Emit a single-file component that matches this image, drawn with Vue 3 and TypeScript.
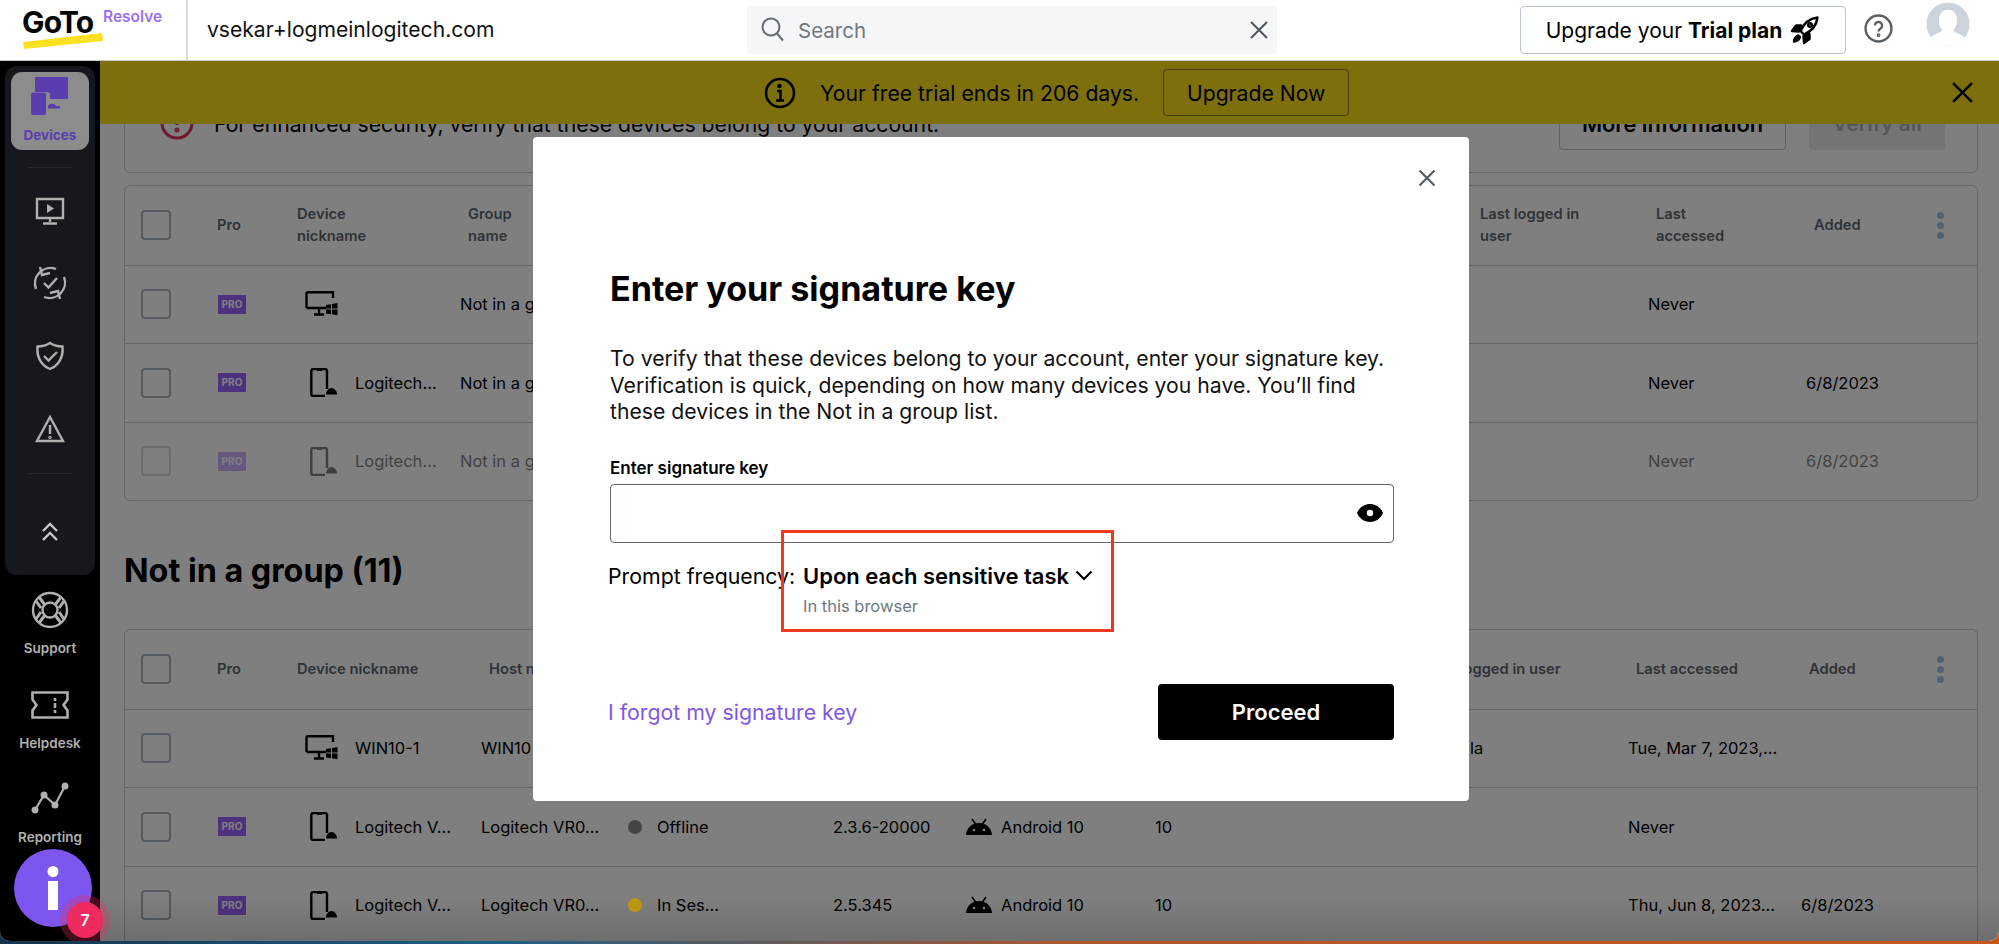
<script setup lang="ts">
interface Row {
  pro: boolean
  kind: 'desktop' | 'phone'
  nick: string
  group?: string
  never: string
  added: string
  dim?: boolean
}
interface Row2 {
  pro: boolean
  kind: 'desktop' | 'phone'
  nick: string
  host: string
  status?: string
  dot?: string
  version?: string
  os?: string
  sessions?: string
  user?: string
  access: string
  added: string
}
const rows1: Row[] = [
  { pro: true, kind: 'desktop', nick: '', group: 'Not in a group', never: 'Never', added: '' },
  { pro: true, kind: 'phone', nick: 'Logitech...', group: 'Not in a group', never: 'Never', added: '6/8/2023' },
  { pro: true, kind: 'phone', nick: 'Logitech...', group: 'Not in a group', never: 'Never', added: '6/8/2023', dim: true },
]
const rows2: Row2[] = [
  { pro: false, kind: 'desktop', nick: 'WIN10-1', host: 'WIN10', user: 'la', access: 'Tue, Mar 7, 2023,...', added: '' },
  { pro: true, kind: 'phone', nick: 'Logitech V...', host: 'Logitech VR0...', status: 'Offline', dot: '#444444', version: '2.3.6-20000', os: 'Android 10', sessions: '10', access: 'Never', added: '' },
  { pro: true, kind: 'phone', nick: 'Logitech V...', host: 'Logitech VR0...', status: 'In Ses...', dot: '#b8960f', version: '2.5.345', os: 'Android 10', sessions: '10', access: 'Thu, Jun 8, 2023...', added: '6/8/2023' },
]
</script>

<template>
  <div class="app">
    <svg class="defs" width="0" height="0" aria-hidden="true">
      <defs>
        <symbol id="desktop-win" viewBox="0 0 33 26">
          <path d="M1.500 17V2.500A1.200 1.200 0 0 1 2.700 1.300H28V7M1.500 17H21M9 23.500h10M14 18v5" fill="none" stroke="currentColor" stroke-width="2.400" />
          <path d="M21 14l5-.8V17.600H21zM27 13l5.500-.9v5.500H27zM21 18.600h5v4.600l-5-.8zM27 18.600h5.500v5.600L27 23.300z" fill="currentColor" />
        </symbol>
        <symbol id="phone-cloud" viewBox="0 0 28 29">
          <path d="M17 21V3a2 2 0 0 0-2-2H3.300a2 2 0 0 0-2 2v23a2 2 0 0 0 2 2H15" fill="none" stroke="currentColor" stroke-width="2.400" />
          <path d="M7 1.500h5v1.500H7z" fill="currentColor" />
          <path d="M16 26.500c0-3.500 2.500-6.500 5.500-6.500s5.500 3 5.500 6.500z" fill="currentColor" />
        </symbol>
        <symbol id="android" viewBox="0 0 28 18">
          <path d="M1 17C1.500 10 6.500 5 14 5s12.500 5 13 12z" fill="currentColor" />
          <path d="M7 1l3.500 5M21 1l-3.500 5" stroke="currentColor" stroke-width="1.600" />
          <circle cx="9" cy="12" r="1.300" fill="#fff" />
          <circle cx="19" cy="12" r="1.300" fill="#fff" />
        </symbol>
      </defs>
    </svg>

    <header class="topbar">
      <div class="logo">
        <span class="goto">GoTo</span>
        <span class="resolve">Resolve</span>
        <svg class="swoosh" width="82" height="18" viewBox="0 0 82 18"><path d="M1 10L80 1l1 8L2 17z" fill="#fbe122" /></svg>
      </div>
      <div class="account">vsekar+logmeinlogitech.com</div>
      <div class="search">
        <svg width="26" height="28" viewBox="0 0 26 28" fill="none" stroke="#5f6b76" stroke-width="2"><circle cx="11" cy="11" r="8.500" /><path d="M17 17.500l6 7" /></svg>
        <span class="search-text">Search</span>
        <svg class="search-x" width="20" height="20" viewBox="0 0 20 20" stroke="#4a5560" stroke-width="2"><path d="M2 2l16 16M18 2L2 18" /></svg>
      </div>
      <button class="upgrade">
        Upgrade your&nbsp;<b>Trial plan</b>
        <svg width="30" height="30" viewBox="0 0 30 30" fill="none" stroke="#000" stroke-width="2.400" stroke-linejoin="round"><path d="M27.500 2.500C19.500 3.500 13.500 9 10.500 16l3.500 3.500c7-3 12.500-9 13.500-17z" /><path d="M11 10.500H6l-4 5.500 7 .5zM19.500 19v5l-5.500 4-.5-7z" fill="#000" /><path d="M8.500 20.500C6 21 4.500 23.500 4 26.500c3-.5 5.500-2 6-4.500z" fill="#000" /><circle cx="20" cy="10" r="1.800" /></svg>
      </button>
      <svg class="help" width="29" height="29" viewBox="0 0 28 28" fill="none" stroke="#5a5f64" stroke-width="2.300"><circle cx="14" cy="14" r="12.500" /><path d="M10.500 11a3.500 3.500 0 1 1 5.500 3c-1.300.9-2 1.500-2 3" /><circle cx="14" cy="20.500" r=".7" /></svg>
      <svg class="avatar" width="44" height="44" viewBox="0 0 46 46"><defs><clipPath id="av"><circle cx="23" cy="23" r="22.500" /></clipPath></defs><circle cx="23" cy="23" r="22.500" fill="#ccd3da" /><g clip-path="url(#av)"><path d="M23 8c6 0 9.500 5 9.500 11 0 5-2 8.500-4 10.500 1 3 8 3 12 8V46H5v-8.500c4-5 11-5 12-8-2-2-3.500-5.500-3.500-10.500C13.500 13 17 8 23 8z" fill="#fff" /></g></svg>
    </header>

    <div class="shell">
      <aside class="sidebar">
        <div class="panel">
          <div class="tile">
            <svg width="40" height="38" viewBox="0 0 40 38" fill="#5a3eb0"><path d="M5 0h33v22H20v-4a3 3 0 0 0-3-3H5zM1 17.500a2 2 0 0 1 2-2h11a2 2 0 0 1 2 2V36a2 2 0 0 1-2 2H3a2 2 0 0 1-2-2z" /><path d="M18 29c1-3 7-3 8 0h4v2.500H18z" /></svg>
            <span class="tile-label">Devices</span>
          </div>
          <div class="rule"></div>
          <svg class="nav-i screen" width="30" height="30" viewBox="0 0 30 30" fill="none" stroke="currentColor" stroke-width="2.400"><path d="M2 3h26v19H2zM15 22v4M8 27.500h14" /><path d="M12 8l7 4.500-7 4.500z" fill="currentColor" stroke="none" /></svg>
          <svg class="nav-i sync" width="36" height="36" viewBox="0 0 36 36" fill="none" stroke="currentColor" stroke-width="2.400"><path d="M4 24A15.500 15.500 0 0 1 24 4M32 12a15.500 15.500 0 0 1-20 20" /><path d="M8 2l2 8 8-2M28 34l-2-8-8 2M12 18l4.500 4.500L25 13" /></svg>
          <svg class="nav-i shield" width="30" height="30" viewBox="0 0 30 30" fill="none" stroke="currentColor" stroke-width="2.400"><path d="M15 2c3 2 8 3.500 12.500 3.500C28.500 17 23 25 15 28 7 25 1.500 17 2.500 5.500 7 5.500 12 4 15 2z" /><path d="M9 15l4.500 4.500L22 11" /></svg>
          <svg class="nav-i warn" width="30" height="30" viewBox="0 0 30 30" fill="none" stroke="currentColor" stroke-width="2.400"><path d="M15 3l13 24H2z" /><path d="M15 11v9" /><circle cx="15" cy="23.500" r=".6" /></svg>
          <div class="rule r2"></div>
          <svg class="nav-i chev" width="18" height="20" viewBox="0 0 18 20" fill="none" stroke="currentColor" stroke-width="2.400"><path d="M2 9l7-7 7 7M2 18l7-7 7 7" /></svg>
        </div>
        <div class="side-link support">
          <svg width="38" height="38" viewBox="0 0 38 38" fill="none" stroke="currentColor" stroke-width="2.400"><circle cx="19" cy="19" r="17" /><circle cx="19" cy="19" r="7.500" /><path d="M8 6l6 8M30 6l-6 8M8 32l6-8M30 32l-6-8M5 10l5 7M33 10l-5 7M5 28l5-7M33 28l-5-7" stroke-width="3" /></svg>
          <span>Support</span>
        </div>
        <div class="side-link helpdesk">
          <svg width="38" height="28" viewBox="0 0 38 28" fill="none" stroke="currentColor" stroke-width="2.600"><path d="M1.500 1.500h35v7l-4 5.500 4 5.500v7h-35v-7l4-5.500-4-5.500z" /><path d="M24 7v3M24 12v5M24 19v3" /></svg>
          <span>Helpdesk</span>
        </div>
        <div class="side-link reporting">
          <svg width="38" height="32" viewBox="0 0 38 32" fill="none" stroke="currentColor" stroke-width="2.200"><path d="M4 28L13 13l11 10L34 4" /><circle cx="4" cy="28" r="2.400" fill="currentColor" /><circle cx="13" cy="13" r="2.400" fill="currentColor" /><circle cx="24" cy="23" r="2.400" fill="currentColor" /><circle cx="34" cy="4" r="2.400" fill="currentColor" /></svg>
          <span>Reporting</span>
        </div>
      </aside>

      <main class="main">
        <div class="banner">
          <svg width="32" height="32" viewBox="0 0 32 32" fill="none" stroke="#000" stroke-width="2.600"><circle cx="16" cy="16" r="14" /><path d="M13 14h3.500v9M12 23.500h8" /><circle cx="15.500" cy="9" r="1" fill="#000" /></svg>
          <span class="banner-text">Your free trial ends in 206 days.</span>
          <button class="banner-btn">Upgrade Now</button>
          <svg class="banner-x" width="23" height="23" viewBox="0 0 22 22" stroke="#000" stroke-width="2.400"><path d="M2 2l18 18M20 2L2 20" /></svg>
        </div>
        <div class="content">
          <section class="notice">
            <svg class="alert" width="34" height="34" viewBox="0 0 34 34" fill="none" stroke="#e0335c" stroke-width="3"><circle cx="17" cy="17" r="15" /><path d="M17 9v10" /><circle cx="17" cy="24" r="1" /></svg>
            <span class="notice-text">For enhanced security, verify that these devices belong to your account.</span>
            <button class="more">More information</button>
            <button class="verify">Verify all</button>
          </section>

          <section class="table t1">
            <div class="tr head">
              <span class="box"></span>
              <span>Pro</span>
              <span>Device<br />nickname</span>
              <span class="hp">Group<br />name</span>
              <span>Last logged in<br />user</span>
              <span class="hp">Last<br />accessed</span>
              <span class="hp">Added</span>
              <span class="dots"><i></i><i></i><i></i></span>
            </div>
            <div v-for="(r, i) in rows1" :key="i" class="tr" :class="{ dim: r.dim }">
              <span class="box"></span>
              <span><b v-if="r.pro" class="pro">PRO</b></span>
              <span class="dev">
                <svg class="dev-i" :class="r.kind" :width="r.kind === 'desktop' ? 33 : 28" :height="r.kind === 'desktop' ? 26 : 29"><use :href="r.kind === 'desktop' ? '#desktop-win' : '#phone-cloud'" /></svg>
                <span>{{ r.nick }}</span>
              </span>
              <span>{{ r.group }}</span>
              <span></span>
              <span>{{ r.never }}</span>
              <span>{{ r.added }}</span>
              <span></span>
            </div>
          </section>

          <h2 class="heading">Not in a group (11)</h2>

          <section class="table t2">
            <div class="tr head">
              <span class="box"></span>
              <span>Pro</span>
              <span>Device nickname</span>
              <span class="hp">Host name</span>
              <span></span>
              <span></span>
              <span></span>
              <span></span>
              <span class="nowrap hp">Last logged in user</span>
              <span class="hp">Last accessed</span>
              <span class="hp">Added</span>
              <span class="dots"><i></i><i></i><i></i></span>
            </div>
            <div v-for="(r, i) in rows2" :key="i" class="tr">
              <span class="box"></span>
              <span><b v-if="r.pro" class="pro">PRO</b></span>
              <span class="dev">
                <svg class="dev-i" :class="r.kind" :width="r.kind === 'desktop' ? 33 : 28" :height="r.kind === 'desktop' ? 26 : 29"><use :href="r.kind === 'desktop' ? '#desktop-win' : '#phone-cloud'" /></svg>
                <span>{{ r.nick }}</span>
              </span>
              <span>{{ r.host }}</span>
              <span class="status"><i v-if="r.dot" :style="{ background: r.dot }"></i>{{ r.status }}</span>
              <span>{{ r.version }}</span>
              <span class="os"><svg v-if="r.os" width="28" height="18"><use href="#android" /></svg>{{ r.os }}</span>
              <span>{{ r.sessions }}</span>
              <span class="user">{{ r.user }}</span>
              <span>{{ r.access }}</span>
              <span>{{ r.added }}</span>
              <span></span>
            </div>
          </section>
        </div>
      </main>

      <div class="scrim"></div>

      <button class="fab">
        <svg width="22" height="44" viewBox="0 0 22 44" fill="#fff"><circle cx="11" cy="5.500" r="5.500" /><rect x="6" y="15" width="10" height="29" /></svg>
        <span class="badge">7</span>
      </button>
    </div>

    <div class="modal">
      <svg class="modal-x" width="18" height="18" viewBox="0 0 18 18" stroke="#555c63" stroke-width="2.200"><path d="M1.500 1.500l15 15M16.500 1.500l-15 15" /></svg>
      <h1 class="title">Enter your signature key</h1>
      <p class="para">To verify that these devices belong to your account, enter your signature key.<br />Verification is quick, depending on how many devices you have. You’ll find<br />these devices in the Not in a group list.</p>
      <label class="label">Enter signature key</label>
      <div class="input">
        <svg width="26" height="18" viewBox="0 0 26 18"><path d="M13 0c6 0 11 4 13 9-2 5-7 9-13 9S2 14 0 9c2-5 7-9 13-9z" fill="#000" /><circle cx="13" cy="9" r="3.200" fill="#fff" /></svg>
      </div>
      <div class="prompt">
        <span class="prompt-label">Prompt frequency:</span>
        <div>
          <div class="prompt-value">Upon each sensitive task
            <svg width="18" height="11" viewBox="0 0 18 11" fill="none" stroke="#000" stroke-width="2.200"><path d="M1.500 1.500L9 9l7.500-7.500" /></svg>
          </div>
          <div class="prompt-sub">In this browser</div>
        </div>
      </div>
      <div class="footer">
        <a class="forgot">I forgot my signature key</a>
        <button class="proceed">Proceed</button>
      </div>
      <div class="annotation"></div>
    </div>
  </div>
</template>

<style scoped>
.app {
  position: relative;
  width: 1999px;
  height: 944px;
  overflow: hidden;
  display: flex;
  flex-direction: column;
  font-family: Inter, "Liberation Sans", sans-serif;
  color: #000;
  background: linear-gradient(90deg, #16354d 0%, #1f5f88 25%, #b4572a 55%, #c8581f 100%);
}
.defs { position: absolute; }
button { font-family: inherit; cursor: pointer; }

/* top bar */
.topbar {
  flex: none;
  height: 61px;
  box-sizing: border-box;
  display: flex;
  align-items: center;
  background: #fff;
  border-bottom: 1px solid #c4c9ce;
  position: relative;
  z-index: 3;
}
.logo {
  position: relative;
  width: 188px;
  height: 60px;
  flex: none;
  box-sizing: border-box;
  border-right: 2px solid #d4dae0;
}
.goto {
  position: absolute;
  left: 22px;
  top: 4px;
  font-size: 30px;
  line-height: 36px;
  font-weight: 700;
  letter-spacing: -.8px;
}
.resolve {
  position: absolute;
  left: 103px;
  top: 7px;
  font-size: 15.500px;
  line-height: 20px;
  font-weight: 600;
  color: #9a6ff0;
}
.swoosh { position: absolute; left: 22px; top: 32px; }
.account {
  margin-left: 19px;
  width: 540px;
  font-size: 21.100px;
  line-height: 28px;
  color: #111;
}
.search {
  width: 530px;
  height: 48px;
  box-sizing: border-box;
  padding: 0 8px 0 13px;
  display: flex;
  align-items: center;
  background: #f5f6f7;
  border-radius: 4px;
}
.search-text { margin-left: 12px; font-size: 20.500px; color: #6f7880; flex: 1; }
.upgrade {
  margin-left: 243px;
  width: 326px;
  height: 48px;
  display: flex;
  align-items: center;
  justify-content: center;
  background: #fff;
  border: 1px solid #b9c4ce;
  border-radius: 4px;
  font-size: 21px;
  color: #000;
  padding: 0;
}
.upgrade b { font-weight: 700; margin-right: 8px; }
.help { margin-left: 18px; flex: none; margin-top: -4px; }
.avatar { margin-left: 33px; flex: none; margin-top: -12px; }

/* below the bar */
.shell {
  position: relative;
  flex: none;
  height: 880px;
  display: flex;
  border-radius: 0 0 10px 10px;
  overflow: hidden;
  background: #fff;
}
.sidebar {
  flex: none;
  width: 100px;
  background: #000;
  box-sizing: border-box;
  padding: 5px 5px 0;
  display: flex;
  flex-direction: column;
  align-items: center;
  color: #fff;
}
.panel {
  width: 90px;
  height: 509px;
  flex: none;
  box-sizing: border-box;
  background: #2a3138;
  border-radius: 12px;
  padding-top: 6px;
  display: flex;
  flex-direction: column;
  align-items: center;
}
.tile {
  position: relative;
  z-index: 3;
  width: 78px;
  height: 78px;
  box-sizing: border-box;
  padding-top: 5px;
  background: #8c8c8c;
  border-radius: 11px;
  display: flex;
  flex-direction: column;
  align-items: center;
}
.tile-label { margin-top: 11px; font-size: 13.500px; font-weight: 700; line-height: 18px; color: #5a3eb0; }
.rule { width: 44px; height: 1px; background: #4a525a; margin-top: 17px; flex: none; }
.nav-i { flex: none; display: block; position: relative; z-index: 3; color: #b0b0b0; }
.screen { margin-top: 28px; }
.sync { margin-top: 39px; }
.shield { margin-top: 40px; }
.warn { margin-top: 43px; }
.r2 { margin-top: 29px; }
.chev { margin-top: 48px; color: #c8c8c8; }
.side-link {
  position: relative;
  z-index: 3;
  display: flex;
  flex-direction: column;
  align-items: center;
  font-size: 13.500px;
  line-height: 18px;
  font-weight: 600;
  color: #b0b0b0;
}
.support { margin-top: 16px; }
.support span { margin-top: 10px; }
.helpdesk { margin-top: 34px; }
.helpdesk span { margin-top: 15px; }
.reporting { margin-top: 30px; }
.reporting span { margin-top: 14px; }

.main {
  flex: 1;
  min-width: 0;
  display: flex;
  flex-direction: column;
  background: #fff;
}
.banner {
  flex: none;
  height: 63px;
  box-sizing: border-box;
  padding: 0 25px 0 664px;
  display: flex;
  align-items: center;
  background: #fade16;
  position: relative;
  z-index: 1;
}
.banner-text { margin-left: 24px; font-size: 21.200px; }
.banner-btn {
  margin-left: 24px;
  width: 186px;
  height: 47px;
  background: transparent;
  border: 1px solid #8c7c10;
  border-radius: 4px;
  font-size: 21.200px;
  color: #000;
}
.banner-x { margin-left: auto; }
.content {
  flex: 1;
  min-height: 0;
  overflow: hidden;
  padding: 0 21px 0 24px;
  font-size: 16.500px;
}
.notice {
  height: 110px;
  margin-top: -61px;
  box-sizing: border-box;
  padding: 33px 32px 0 35px;
  display: flex;
  align-items: flex-start;
  border: 1px solid #c8d0d8;
  border-radius: 6px;
}
.alert { flex: none; margin-top: 9px; }
.notice-text { margin: 13px 0 0 20px; font-size: 21.200px; line-height: 28px; flex: 1; white-space: nowrap; }
.more, .verify {
  height: 53px;
  font-size: 21px;
  font-weight: 600;
  border-radius: 4px;
}
.more { width: 227px; font-size: 21.800px; background: #fff; border: 1px solid #b9c4ce; color: #000; }
.verify { width: 136px; margin-left: 23px; background: #e6e9ec; border: 0; color: #a8afb5; }
.table {
  margin-top: 12px;
  border: 1px solid #c8d0d8;
  border-radius: 6px;
  box-sizing: border-box;
}
.tr {
  display: grid;
  align-items: center;
  height: 78.500px;
  box-sizing: border-box;
  padding-left: 16px;
  border-top: 1px solid #c8d0d8;
}
.tr:first-child { border-top: 0; }
.t1 .tr { grid-template-columns: 76px 80px 163px 1020px 168px 158px 134px 38px; }
.t2 { margin-top: 0; height: 320px; border-bottom: 0; border-radius: 6px 6px 0 0; }
.t2 .tr { grid-template-columns: 76px 80px 184px 147px 205px 132px 190px 263px 210px 173px 139px 38px; }
.head { font-size: 14.700px; line-height: 22px; font-weight: 600; color: #5d6670; }
.hp { padding-left: 8px; }
.nowrap { white-space: nowrap; }
.box {
  width: 30px;
  height: 30px;
  box-sizing: border-box;
  border: 2px solid #a9b4bf;
  border-radius: 4px;
}
.pro {
  display: block;
  width: 28px;
  height: 19px;
  margin-left: 1px;
  background: #9a64ff;
  color: #fff;
  font-size: 10px;
  line-height: 19px;
  font-weight: 700;
  text-align: center;
}
.dev { display: flex; align-items: center; padding-left: 8px; white-space: nowrap; }
.dev-i { flex: none; color: #000; }
.dev-i.desktop { margin-right: 17px; }
.dev-i.phone { margin-left: 5px; margin-right: 17px; }
.status { display: flex; align-items: center; gap: 15px; }
.status i { width: 14px; height: 14px; border-radius: 50%; flex: none; position: relative; z-index: 3; }
.os { display: flex; align-items: center; gap: 8px; }
.user { padding-left: 52px; }
.dots { display: flex; flex-direction: column; align-items: center; gap: 3px; width: 8px; margin-left: -4px; }
.dots i { width: 7px; height: 7px; border-radius: 50%; background: #a7c4dc; }
.dim > * { opacity: .5; }
.heading {
  margin: 48px 0 36px;
  font-size: 32.300px;
  line-height: 44px;
  font-weight: 700;
  color: #000;
}
.scrim {
  position: absolute;
  inset: 0;
  background: linear-gradient(rgba(0, 0, 0, .5) 95%, rgba(0, 0, 0, .57) 100%);
  z-index: 2;
}
.fab {
  position: absolute;
  left: 14px;
  top: 788px;
  width: 78px;
  height: 78px;
  border: 0;
  padding: 0;
  border-radius: 50%;
  background: #7c56ee;
  z-index: 3;
  display: flex;
  align-items: center;
  justify-content: center;
}
.badge {
  position: absolute;
  left: 53px;
  top: 53px;
  width: 36px;
  height: 36px;
  border-radius: 50%;
  background: #ee2a5e;
  box-shadow: 0 0 0 7px rgba(238, 42, 94, .3);
  color: #fff;
  font-size: 16px;
  line-height: 36px;
  font-weight: 600;
  text-align: center;
}

/* modal */
.modal {
  position: absolute;
  left: 533px;
  top: 137px;
  width: 936px;
  height: 664px;
  box-sizing: border-box;
  padding: 132px 75px 0 77px;
  background: #fff;
  border-radius: 4px;
  z-index: 4;
}
.modal-x { position: absolute; right: 33px; top: 32px; }
.title { margin: 0; font-size: 34.100px; line-height: 40px; font-weight: 700; }
.para { margin: 36px 0 0; font-size: 21.200px; line-height: 26.500px; color: #111; white-space: nowrap; }
.label { display: block; margin-top: 33px; font-size: 17px; line-height: 20px; font-weight: 600; }
.input {
  margin-top: 6px;
  height: 59px;
  box-sizing: border-box;
  padding-right: 10px;
  display: flex;
  align-items: center;
  justify-content: flex-end;
  border: 1px solid #5f6871;
  border-radius: 4px;
}
.prompt { display: flex; margin: 21px 0 0 -2px; }
.prompt-label { width: 195px; flex: none; font-size: 21.300px; line-height: 24px; white-space: nowrap; }
.prompt-value { display: flex; align-items: center; gap: 6px; font-size: 22px; line-height: 24px; font-weight: 600; white-space: nowrap; }
.prompt-sub { margin-top: 8px; font-size: 16.500px; line-height: 20px; color: #6f7880; }
.footer { display: flex; align-items: center; justify-content: space-between; margin: 68px 0 0 -2px; }
.forgot { font-size: 21.300px; line-height: 28px; color: #7f56e8; }
.proceed {
  width: 236px;
  height: 56px;
  background: #000;
  color: #fff;
  border: 0;
  border-radius: 4px;
  font-size: 22px;
  font-weight: 600;
}
.annotation {
  position: absolute;
  left: 248px;
  top: 393px;
  width: 333px;
  height: 102px;
  box-sizing: border-box;
  border: 3px solid #f0391c;
}
</style>
